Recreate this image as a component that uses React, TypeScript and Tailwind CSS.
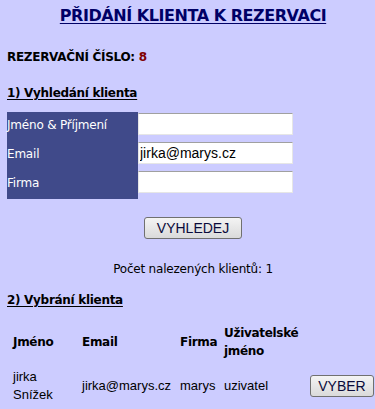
import React from "react";

function GrayButton({ label, className }: { label: string; className?: string }) {
  return (
    <button
      type="button"
      className={`h-[22px] rounded-[3px] border border-[#707070] bg-gradient-to-b from-[#f4f4f4] to-[#dadada] font-['Liberation_Sans',Arial,sans-serif] text-[14px] leading-none text-[#0a0a3a] ${className ?? ""}`}
    >
      {label}
    </button>
  );
}

const fields = [
  { label: "Jméno & Příjmení", value: "" },
  { label: "Email", value: "jirka@marys.cz" },
  { label: "Firma", value: "" },
];

const head = "py-[4px] pl-[6px] text-[12px] font-bold leading-[18px] tracking-[-0.3px]";
const cell = "py-[4px] pl-[6px] font-['Liberation_Sans',Arial,sans-serif] text-[13px] leading-[18px]";

export default function App() {
  return (
    <div className="h-[409px] w-[375px] overflow-hidden bg-[#ccccff]">
      <div className="w-[386px] font-['DejaVu_Sans',Verdana,sans-serif] text-black">
        <h1 className="pt-[6px] text-center text-[16px] font-bold leading-[20px] tracking-[-0.45px] text-[#000066] underline underline-offset-2">
          PŘIDÁNÍ KLIENTA K REZERVACI
        </h1>

        <p className="mt-[23px] pl-[7px] text-[12px] font-bold leading-[16px] tracking-[-0.3px]">
          REZERVAČNÍ ČÍSLO: <span className="text-[#800000]">8</span>
        </p>

        <h2 className="mt-[20px] pl-[7px] text-[12px] font-bold leading-[16px] tracking-[-0.3px] underline underline-offset-2">
          1) Vyhledání klienta
        </h2>

        <div className="mt-[11px] ml-[7px] flex flex-col">
          {fields.map((f) => (
            <div key={f.label} className="flex h-[29px]">
              <div className="w-[131px] bg-[#404a8a] pt-[5px] text-[12px] leading-[16px] tracking-[-0.2px] text-white">
                {f.label}
              </div>
              <input
                readOnly
                value={f.value}
                className="mt-px h-[22px] w-[155px] border border-[#e6e6e6] border-t-[#a0a0a0] bg-white px-[1px] font-['Liberation_Sans',Arial,sans-serif] text-[14px] text-black outline-none"
              />
            </div>
          ))}
        </div>

        <div className="mt-[17px] pl-[144px]">
          <GrayButton label="VYHLEDEJ" className="w-[98px]" />
        </div>

        <p className="mt-[21px] text-center text-[12px] leading-[16px] tracking-[-0.2px]">
          Počet nalezených klientů: 1
        </p>

        <h2 className="mt-[15px] pl-[7px] text-[12px] font-bold leading-[16px] tracking-[-0.3px] underline underline-offset-2">
          2) Vybrání klienta
        </h2>

        <div className="mt-[12px] ml-[7px] grid grid-cols-[69px_98px_44px_86px_70px] items-center">
          <div className={head}>Jméno</div>
          <div className={head}>Email</div>
          <div className={head}>Firma</div>
          <div className={head}>
            Uživatelské
            <br />
            jméno
          </div>
          <div />

          <div className={cell}>
            jirka
            <br />
            Snížek
          </div>
          <div className={cell}>jirka@marys.cz</div>
          <div className={cell}>marys</div>
          <div className={cell}>uzivatel</div>
          <div className="py-[4px] pl-[6px]">
            <GrayButton label="VYBER" className="w-[64px]" />
          </div>
        </div>
      </div>
    </div>
  );
}
